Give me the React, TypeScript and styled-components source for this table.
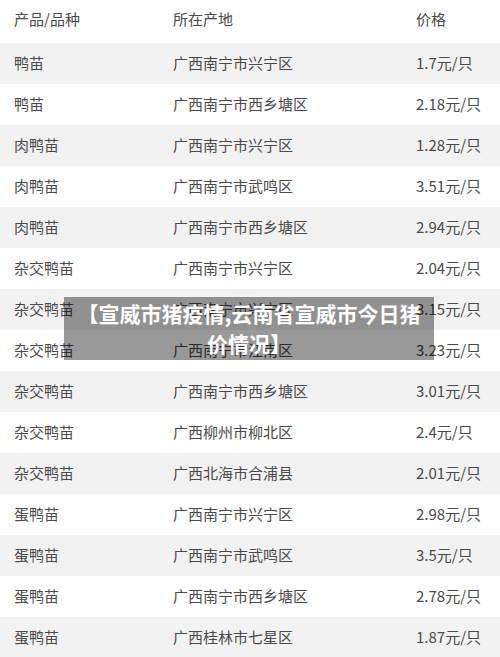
import React from 'react';
import styled, { createGlobalStyle } from 'styled-components';

const rows: [string, string, string][] = [
  ['鸭苗', '广西南宁市兴宁区', '1.7元/只'],
  ['鸭苗', '广西南宁市西乡塘区', '2.18元/只'],
  ['肉鸭苗', '广西南宁市兴宁区', '1.28元/只'],
  ['肉鸭苗', '广西南宁市武鸣区', '3.51元/只'],
  ['肉鸭苗', '广西南宁市西乡塘区', '2.94元/只'],
  ['杂交鸭苗', '广西南宁市兴宁区', '2.04元/只'],
  ['杂交鸭苗', '广西南宁市兴宁区', '3.15元/只'],
  ['杂交鸭苗', '广西南宁市江南区', '3.23元/只'],
  ['杂交鸭苗', '广西南宁市西乡塘区', '3.01元/只'],
  ['杂交鸭苗', '广西柳州市柳北区', '2.4元/只'],
  ['杂交鸭苗', '广西北海市合浦县', '2.01元/只'],
  ['蛋鸭苗', '广西南宁市兴宁区', '2.98元/只'],
  ['蛋鸭苗', '广西南宁市武鸣区', '3.5元/只'],
  ['蛋鸭苗', '广西南宁市西乡塘区', '2.78元/只'],
  ['蛋鸭苗', '广西桂林市七星区', '1.87元/只'],
];

const GlobalStyle = createGlobalStyle`
  html, body {
    margin: 0;
    padding: 0;
    background: #fff;
    overflow: hidden;
  }
  body {
    font-family: "Noto Sans CJK SC", "Noto Sans", sans-serif;
  }
`;

const Page = styled.div`
  position: relative;
  width: 500px;
  height: 657px;
  overflow: hidden;
`;

const Row = styled.div<{ $shaded?: boolean; $head?: boolean }>`
  display: grid;
  grid-template-columns: 159px 243px 1fr;
  align-items: center;
  height: ${(p) => (p.$head ? '43px' : '41px')};
  padding: ${(p) => (p.$head ? '0 0 7px 14px' : '0 0 2px 14px')};
  box-sizing: border-box;
  background: ${(p) => (p.$shaded ? '#f2f2f2' : '#fff')};
  color: #4a4a4a;
  font-size: 15px;
`;

const Cell = styled.span`
  white-space: nowrap;
`;

const Banner = styled.div`
  position: absolute;
  left: 64px;
  top: 297px;
  width: 370px;
  height: 63px;
  padding: 1px 12px;
  box-sizing: border-box;
  background: rgba(0, 0, 0, 0.4);
  color: #fff;
  font-size: 21px;
  font-weight: bold;
  line-height: 30px;
  text-align: center;
`;

export default function App() {
  return (
    <Page>
      <GlobalStyle />
      <Row $head>
        <Cell>产品/品种</Cell>
        <Cell>所在产地</Cell>
        <Cell>价格</Cell>
      </Row>
      {rows.map((r, i) => (
        <Row key={i} $shaded={i % 2 === 0}>
          <Cell>{r[0]}</Cell>
          <Cell>{r[1]}</Cell>
          <Cell>{r[2]}</Cell>
        </Row>
      ))}
      <Banner>【宣威市猪疫情,云南省宣威市今日猪价情况】</Banner>
    </Page>
  );
}
